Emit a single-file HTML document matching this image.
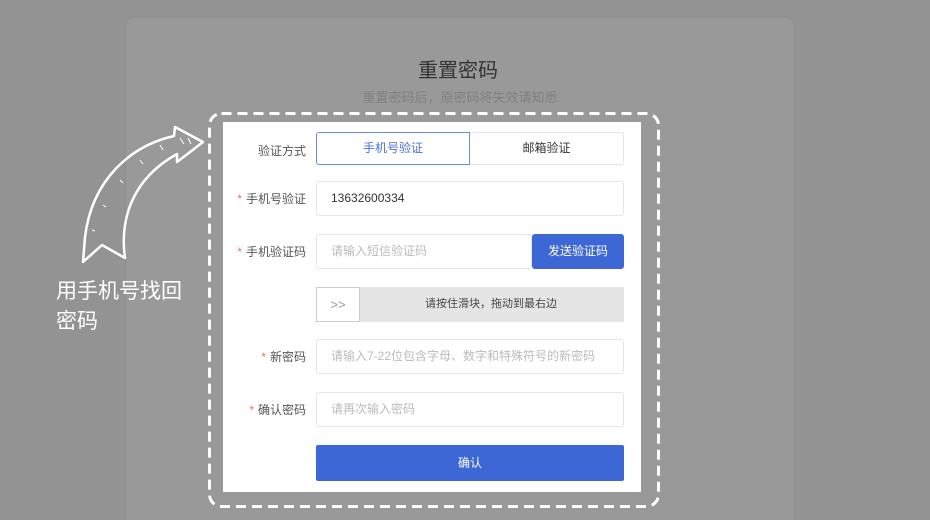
<!DOCTYPE html>
<html style="overflow:hidden"><head><meta charset="utf-8"><style>
*{margin:0;padding:0;box-sizing:border-box}
body{width:930px;height:520px;background:#939393;position:relative;overflow:hidden;font-family:"Liberation Sans","Noto Sans CJK SC",sans-serif}
.card{position:absolute;left:126px;top:18px;width:668px;height:502px;background:#999;border-radius:8px 8px 0 0;box-shadow:0 0 2px rgba(0,0,0,.08)}
.title{position:absolute;left:0;width:916px;top:54px;text-align:center;font-size:20px;color:#333}
.sub{position:absolute;left:0;width:920px;top:87px;text-align:center;font-size:13px;color:#808080}
.panel{position:absolute;left:223px;top:122px;width:418px;height:370px;background:#fff}
.lbl{position:absolute;width:120px;text-align:right;font-size:12px;color:#555;left:186px}
.lbl b{color:#f56c6c;font-weight:normal;margin-right:4px}
.in{position:absolute;left:316px;width:308px;height:35px;border:1px solid #e4e6eb;border-radius:3px;font-size:12px;color:#bbb;padding-left:14px;line-height:33px}
.tab{position:absolute;top:132px;height:33px;font-size:12px;line-height:31px;text-align:center}
</style></head><body>
<div class="card"></div>
<div class="title">重置密码</div>
<div class="sub">重置密码后，原密码将失效请知悉</div>
<div class="panel"></div>
<svg style="position:absolute;left:0;top:0" width="930" height="520">
<rect x="209.5" y="113.5" width="449" height="393" rx="12" fill="none" stroke="#fff" stroke-width="3" stroke-dasharray="10 6"/>
<path d="M203,142 L175,127 L174,136 C130,146 92,180 85,237 L83,262 L102,245 L125,258 C120,222 130,180 177,154 L177,162 Z" fill="none" stroke="#fff" stroke-width="2.5" stroke-linejoin="round"/>
<path d="M180,138 l4,6 M188,138 l3,6 M160,145 l3,5 M140,160 l3,4 M120,180 l3,3 M103,205 l3,2 M92,230 l3,1" stroke="#fff" stroke-width="1"/>
</svg>
<div style="position:absolute;left:56px;top:277px;font-size:21px;color:#fff;line-height:30px">用手机号找回<br>密码</div>
<div class="lbl" style="top:142px">验证方式</div>
<div class="tab" style="left:316px;width:154px;border:1px solid #6a8be0;border-radius:3px 0 0 3px;color:#4a6fd8">手机号验证</div>
<div class="tab" style="left:470px;width:154px;border:1px solid #e4e6eb;border-left:none;border-radius:0 3px 3px 0;color:#333">邮箱验证</div>
<div class="lbl" style="top:190px"><b>*</b>手机号验证</div>
<div class="in" style="top:181px;color:#333">13632600334</div>
<div class="lbl" style="top:243px"><b>*</b>手机验证码</div>
<div class="in" style="top:234px;width:216px">请输入短信验证码</div>
<div style="position:absolute;left:532px;top:234px;width:92px;height:35px;background:#3e67d6;border-radius:3px;color:#fff;font-size:12px;line-height:35px;text-align:center">发送验证码</div>
<div style="position:absolute;left:316px;top:287px;width:308px;height:35px;background:#e5e5e5;font-size:11px;color:#444;line-height:35px;text-align:center;padding-left:42px">请按住滑块，拖动到最右边</div>
<div style="position:absolute;left:316px;top:287px;width:44px;height:35px;background:#fff;border:1px solid #ccc;color:#999;font-size:13px;line-height:33px;text-align:center">&gt;&gt;</div>
<div class="lbl" style="top:348px"><b>*</b>新密码</div>
<div class="in" style="top:339px">请输入7-22位包含字母、数字和特殊符号的新密码</div>
<div class="lbl" style="top:401px"><b>*</b>确认密码</div>
<div class="in" style="top:392px">请再次输入密码</div>
<div style="position:absolute;left:316px;top:445px;width:308px;height:36px;background:#3e67d6;border-radius:2px;color:#fff;font-size:12px;line-height:36px;text-align:center">确认</div>
</body></html>
